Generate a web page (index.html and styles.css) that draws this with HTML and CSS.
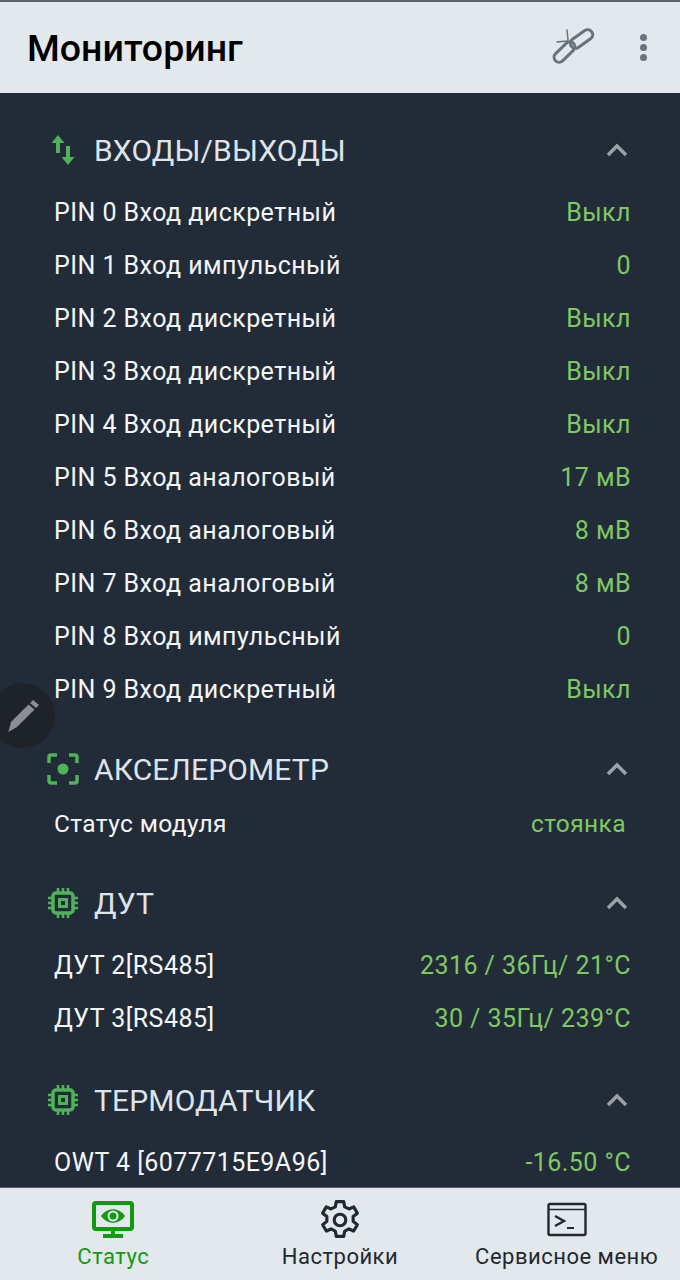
FILE: index.html
```html
<!DOCTYPE html>
<html lang="ru">
<head>
    <meta charset="UTF-8">
    <meta name="viewport" content="width=device-width, initial-scale=1.0">
    <title>Мониторинг</title>
    <link rel="stylesheet" href="styles.css">
</head>
<body>
    <div class="app">
        <header class="topbar">
            <h1>Мониторинг</h1>
            <svg class="link-icon" width="44" height="40" viewBox="0 0 44 40" fill="none" stroke="#68737d" stroke-width="3" stroke-linecap="round">
                <rect x="0" y="19" width="25" height="10" rx="5" transform="rotate(-44 12.500 24)"/>
                <rect x="17" y="6" width="25" height="10" rx="5" transform="rotate(-35 29.500 11)"/>
                <path d="M15 2l1 10M5 14l10-1" stroke-width="1.500"/>
            </svg>
            <div class="dots"><span></span><span></span><span></span></div>
        </header>

        <main class="content">
            <section class="group">
                <div class="group-head">
                    <svg class="group-icon" width="32" height="32" viewBox="0 0 32 32" fill="#4fb357">
                        <path d="M11 1l6.500 8H13v10H9V9H4.500zM21 31l-6.500-8H19V12h4v11h4.500z"/>
                    </svg>
                    <h2>ВХОДЫ/ВЫХОДЫ</h2>
                    <svg class="chevron" width="22" height="14" viewBox="0 0 22 14" fill="none" stroke="#9aa1a9" stroke-width="3.500"><path d="M2 12l9-9 9 9"/></svg>
                </div>
                <div class="rows">
                    <div class="row"><span>PIN 0 Вход дискретный</span><span class="value">Выкл</span></div>
                    <div class="row"><span>PIN 1 Вход импульсный</span><span class="value">0</span></div>
                    <div class="row"><span>PIN 2 Вход дискретный</span><span class="value">Выкл</span></div>
                    <div class="row"><span>PIN 3 Вход дискретный</span><span class="value">Выкл</span></div>
                    <div class="row"><span>PIN 4 Вход дискретный</span><span class="value">Выкл</span></div>
                    <div class="row"><span>PIN 5 Вход аналоговый</span><span class="value">17 мВ</span></div>
                    <div class="row"><span>PIN 6 Вход аналоговый</span><span class="value">8 мВ</span></div>
                    <div class="row"><span>PIN 7 Вход аналоговый</span><span class="value">8 мВ</span></div>
                    <div class="row"><span>PIN 8 Вход импульсный</span><span class="value">0</span></div>
                    <div class="row"><span>PIN 9 Вход дискретный</span><span class="value">Выкл</span></div>
                </div>
            </section>

            <section class="group">
                <div class="group-head">
                    <svg class="group-icon" width="32" height="32" viewBox="0 0 32 32" fill="none" stroke="#4fb357" stroke-width="3.500">
                        <path d="M2 10V4a2 2 0 0 1 2-2h6M22 2h6a2 2 0 0 1 2 2v6M30 22v6a2 2 0 0 1-2 2h-6M10 30H4a2 2 0 0 1-2-2v-6"/>
                        <circle cx="16" cy="16" r="5.500" fill="#4fb357" stroke="none"/>
                    </svg>
                    <h2>АКСЕЛЕРОМЕТР</h2>
                    <svg class="chevron" width="22" height="14" viewBox="0 0 22 14" fill="none" stroke="#9aa1a9" stroke-width="3.500"><path d="M2 12l9-9 9 9"/></svg>
                </div>
                <div class="rows rows-tight">
                    <div class="row"><span>Статус модуля</span><span class="value">стоянка</span></div>
                </div>
            </section>

            <section class="group group-tall">
                <div class="group-head">
                    <svg class="group-icon" width="32" height="32" viewBox="0 0 32 32" fill="none" stroke="#4fb357" stroke-width="3.500">
                        <rect x="6" y="6" width="20" height="20" rx="3"/>
                        <rect x="12.500" y="12.500" width="7" height="7" stroke-width="3"/>
                        <path d="M11 1v4M16 1v4M21 1v4M11 27v4M16 27v4M21 27v4M1 11h4M1 16h4M1 21h4M27 11h4M27 16h4M27 21h4" stroke-width="2.500"/>
                    </svg>
                    <h2>ДУТ</h2>
                    <svg class="chevron" width="22" height="14" viewBox="0 0 22 14" fill="none" stroke="#9aa1a9" stroke-width="3.500"><path d="M2 12l9-9 9 9"/></svg>
                </div>
                <div class="rows">
                    <div class="row"><span>ДУТ 2[RS485]</span><span class="value">2316 / 36Гц/ 21°C</span></div>
                    <div class="row"><span>ДУТ 3[RS485]</span><span class="value">30 / 35Гц/ 239°C</span></div>
                </div>
            </section>

            <section class="group">
                <div class="group-head">
                    <svg class="group-icon" width="32" height="32" viewBox="0 0 32 32" fill="none" stroke="#4fb357" stroke-width="3.500">
                        <rect x="6" y="6" width="20" height="20" rx="3"/>
                        <rect x="12.500" y="12.500" width="7" height="7" stroke-width="3"/>
                        <path d="M11 1v4M16 1v4M21 1v4M11 27v4M16 27v4M21 27v4M1 11h4M1 16h4M1 21h4M27 11h4M27 16h4M27 21h4" stroke-width="2.500"/>
                    </svg>
                    <h2>ТЕРМОДАТЧИК</h2>
                    <svg class="chevron" width="22" height="14" viewBox="0 0 22 14" fill="none" stroke="#9aa1a9" stroke-width="3.500"><path d="M2 12l9-9 9 9"/></svg>
                </div>
                <div class="rows">
                    <div class="row"><span>OWT 4 [6077715E9A96]</span><span class="value">-16.50 °C</span></div>
                </div>
            </section>

            <div class="edit-button">
                <svg width="34" height="34" viewBox="0 0 34 34" fill="#8b8f94">
                    <path d="M27 1l6 5-3 3-6-5zM22.500 5.500l6 5L11 28l-7 4-2 1 1-2 2-8z"/>
                </svg>
            </div>
        </main>

        <nav class="tabs">
            <div class="tab tab-active">
                <svg width="42" height="38" viewBox="0 0 42 38" fill="none" stroke="#109a10">
                    <rect x="2" y="2" width="38" height="26" rx="2" stroke-width="4"/>
                    <path d="M21 28v5M11 35h20" stroke-width="4"/>
                    <path d="M9 15c6-9 18-9 24 0-6 9-18 9-24 0z" fill="#109a10" stroke="none"/>
                    <circle cx="21" cy="15" r="4.500" stroke="#e3e8ec" stroke-width="2"/>
                </svg>
                <span>Статус</span>
            </div>
            <div class="tab">
                <svg width="40" height="40" viewBox="1 1 38 38" fill="none" stroke="#22282e" stroke-width="3" stroke-linejoin="round">
                    <path d="M16.500 2.500h7l1 5 4 2 4.500-2 3.500 6-4 3.200v4.600l4 3.200-3.500 6-4.500-2-4 2-1 5h-7l-1-5-4-2-4.500 2-3.500-6 4-3.200v-4.600l-4-3.200 3.500-6 4.500 2 4-2z"/>
                    <circle cx="20" cy="20" r="5.500"/>
                </svg>
                <span>Настройки</span>
            </div>
            <div class="tab">
                <svg width="40" height="40" viewBox="0 -1 40 40" fill="none" stroke="#22282e">
                    <rect x="1.500" y="3" width="37" height="31" rx="1.500" stroke-width="2.400"/>
                    <path d="M2 8.500h36" stroke-width="1.500"/>
                    <path d="M8 15l9 5-9 5" stroke-width="2.400"/>
                    <path d="M20 27h7" stroke-width="2"/>
                </svg>
                <span>Сервисное меню</span>
            </div>
        </nav>
    </div>
</body>
</html>
```

FILE: styles.css
```css
body {
    margin: 0;
    font-family: Roboto, "Noto Sans", sans-serif;
    background-color: #222c39;
}
.app {
    display: flex;
    flex-direction: column;
    height: 1280px;
    overflow: hidden;
}
.topbar {
    display: flex;
    align-items: center;
    height: 91px;
    flex-shrink: 0;
    padding: 0 27px;
    border-top: 2px solid #59626b;
    background-color: #e3e8ec;
}
.topbar h1 {
    flex: 1;
    margin: 0;
    font-size: 37.500px;
    font-weight: 500;
    color: #000000;
}
.link-icon {
    margin-right: 44px;
}
.dots {
    display: flex;
    flex-direction: column;
    gap: 3px;
    margin-right: 6px;
}
.dots span {
    width: 7px;
    height: 7px;
    border-radius: 50%;
    background-color: #68737d;
}
.content {
    position: relative;
    flex: 1;
    padding-top: 30px;
    overflow: hidden;
}
.group {
    margin-bottom: 27px;
}
.group-tall {
    margin-bottom: 29px;
}
.group-head {
    display: flex;
    align-items: center;
    height: 54px;
    padding: 0 52px 0 47px;
}
.group-icon {
    flex-shrink: 0;
    width: 32px;
}
.group-head h2 {
    flex: 1;
    margin: 0 0 0 15px;
    font-size: 30px;
    font-weight: 400;
    letter-spacing: 0.150px;
    color: #dfe4ea;
}
.rows {
    margin-top: 8px;
}
.rows-tight {
    margin-top: 0;
}
.rows-tight .row {
    padding: 2px 54px 0 54px;
    font-size: 24.500px;
    letter-spacing: 0.400px;
}
.row {
    display: flex;
    align-items: center;
    justify-content: space-between;
    box-sizing: border-box;
    height: 53px;
    padding: 2px 49px 0 54px;
    font-size: 25px;
    letter-spacing: 0.450px;
    color: #f4f6f8;
}
.value {
    color: #7fc862;
}
.edit-button {
    position: absolute;
    left: -10px;
    top: 590px;
    display: flex;
    align-items: center;
    justify-content: center;
    width: 65px;
    height: 65px;
    border-radius: 50%;
    background-color: #1e2329;
}
.tabs {
    display: grid;
    grid-template-columns: repeat(3, 1fr);
    height: 92px;
    flex-shrink: 0;
    border-top: 1px solid #59626b;
    background-color: #e3e8ec;
}
.tab {
    display: flex;
    flex-direction: column;
    align-items: center;
    padding-top: 12px;
    font-size: 22px;
    letter-spacing: 0.500px;
    color: #22282e;
}
.tab svg {
    height: 40px;
    margin-bottom: 4px;
}
.tab-active {
    color: #109a10;
}
```
